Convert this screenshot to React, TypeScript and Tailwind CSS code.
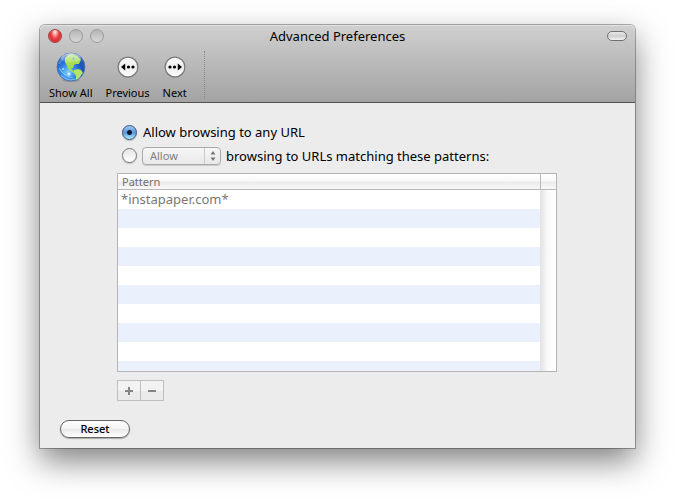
import { useState } from "react";

const PATTERNS = ["*instapaper.com*", "", "", "", "", "", "", "", "", ""];

function GlobeIcon() {
  return (
    <svg width="30" height="30" viewBox="0 0 30 30" aria-hidden="true">
      <defs>
        <radialGradient id="ocean" cx="0.4" cy="0.68" r="0.65">
          <stop offset="0" stopColor="#7fd3ff" />
          <stop offset="0.4" stopColor="#358ae8" />
          <stop offset="0.8" stopColor="#1d50bd" />
          <stop offset="1" stopColor="#2a5fb4" />
        </radialGradient>
        <linearGradient id="gloss" x1="0" y1="0" x2="0" y2="1">
          <stop offset="0" stopColor="#fff" stopOpacity="0.7" />
          <stop offset="1" stopColor="#fff" stopOpacity="0.1" />
        </linearGradient>
        <clipPath id="disc">
          <circle cx="15" cy="15" r="14" />
        </clipPath>
      </defs>
      <ellipse cx="15" cy="28" rx="9" ry="2" fill="#555" opacity="0.3" />
      <circle cx="15" cy="15" r="14" fill="url(#ocean)" stroke="#4a74ad" strokeWidth="0.8" />
      <g clipPath="url(#disc)">
        <path
          d="M9 6l3-3 4-1 5 2 4 4-2 4-3 0-2 1-1 3-2 0 1 2 3 2-1 1-5-3-2-4-2-4z"
          fill="#a5dc52"
        />
        <path d="M18 18l4-1 3 1 2 3-2 2-2 3-3 2 0-4-2-3z" fill="#b5e35f" />
        <path d="M2 12l3-6 3-2-1 4-3 4z" fill="#5c9fd8" opacity="0.7" />
        <path d="M17 5l2 1-1 2-2-1z" fill="#5f9fd4" />
        <path d="M3 16q6 9 14 10" stroke="#c4ecff" strokeWidth="1.2" fill="none" opacity="0.5" />
        <circle cx="13" cy="22" r="1.6" fill="#e8f9ff" opacity="0.9" />
        <circle cx="7" cy="17" r="1" fill="#d9f3ff" opacity="0.8" />
        <ellipse cx="15" cy="6" rx="10" ry="5" fill="url(#gloss)" />
      </g>
      <path d="M5 23.5q10 9 20 0" stroke="#b5eeff" strokeWidth="1" fill="none" opacity="0.6" />
    </svg>
  );
}

function StepIcon({ id, forward = false }: { id: string; forward?: boolean }) {
  return (
    <svg width="22" height="22" viewBox="0 0 22 22" aria-hidden="true">
      <defs>
        <linearGradient id={id} x1="0" y1="0" x2="0" y2="1">
          <stop offset="0" stopColor="#fff" />
          <stop offset="0.5" stopColor="#ececec" />
          <stop offset="1" stopColor="#fff" />
        </linearGradient>
      </defs>
      <circle cx="11" cy="12" r="10" fill="#666" opacity="0.35" />
      <circle cx="11" cy="11" r="9.9" fill={`url(#${id})`} stroke="#7a7a7a" strokeWidth="1.3" />
      <g transform={forward ? "matrix(-1 0 0 1 22 0)" : undefined} fill="#000">
        <path d="M4 11L8.2 7.6V14.4z" />
        <circle cx="11.5" cy="11" r="1.6" />
        <circle cx="16" cy="11" r="1.6" />
      </g>
    </svg>
  );
}

interface ToolbarButtonProps {
  icon: React.ReactNode;
  label: string;
}

function ToolbarButton({ icon, label }: ToolbarButtonProps) {
  return (
    <button type="button" className="flex flex-col items-center gap-0.5 text-[11px] leading-4">
      <span className="flex h-8 items-center">{icon}</span>
      <span>{label}</span>
    </button>
  );
}

const radioClass =
  "size-[15px] shrink-0 appearance-none rounded-full border border-[#777] bg-linear-to-b from-[#e6e6e6] to-white shadow-[0_1px_1px_#bbb] checked:border-[#31527f] checked:bg-[radial-gradient(circle_at_50%_50%,#0c1a30_0_2px,transparent_3px),linear-gradient(#a9c8ee,#5795dc_50%,#b2ecff)]";

export default function App() {
  const [mode, setMode] = useState("any");

  return (
    <div className="bg-white px-10 pt-[25px] pb-[54px] font-['Noto_Sans','Open_Sans',sans-serif] text-black">
      <main className="rounded-t-[5px] bg-[#ececec] shadow-[0_0_0_1px_#0000004d,0_13px_32px_#00000080]">
        <header className="rounded-t-[5px] border-b border-[#515151] bg-linear-to-b from-[#d0d0d0] to-[#a3a3a3] shadow-[inset_0_1px_0_#e2e2e2]">
          <div className="grid h-[22px] grid-cols-[1fr_auto_1fr] items-center px-2">
            <div className="flex gap-[7px]">
              <button
                type="button"
                aria-label="Close"
                className="size-[14px] rounded-full border border-[#a43b3b] bg-[radial-gradient(ellipse_at_50%_15%,#ffd5d3_0_10%,#e9484b_45%,#d92f35_65%,#ff9c94)]"
              />
              <button
                type="button"
                aria-label="Minimize"
                className="size-[14px] rounded-full border border-[#9b9b9b] bg-linear-to-b from-[#b5b5b5] to-[#d8d8d8]"
              />
              <button
                type="button"
                aria-label="Zoom"
                className="size-[14px] rounded-full border border-[#9b9b9b] bg-linear-to-b from-[#b5b5b5] to-[#d8d8d8]"
              />
            </div>
            <h1 className="text-[13px] leading-5">Advanced Preferences</h1>
            <button
              type="button"
              aria-label="Toggle toolbar"
              className="h-[10px] w-5 justify-self-end rounded-full border border-[#707070] bg-linear-to-b from-[#e8e8e8] via-[#cfcfcf] to-[#f4f4f4]"
            />
          </div>
          <nav className="flex h-[55px] items-start gap-[13px] px-[9px] pt-1">
            <ToolbarButton icon={<GlobeIcon />} label="Show All" />
            <ToolbarButton icon={<StepIcon id="prev-face" />} label="Previous" />
            <ToolbarButton icon={<StepIcon id="next-face" forward />} label="Next" />
            <div className="ml-1 h-12 border-l border-dotted border-[#888]" />
          </nav>
        </header>

        <div className="pt-[17px] pr-[78px] pl-[77px]">
          <div className="flex h-6 items-center gap-[6px] pl-[5px]">
            <input
              id="any-url"
              type="radio"
              name="mode"
              checked={mode === "any"}
              onChange={() => setMode("any")}
              className={radioClass}
            />
            <label htmlFor="any-url" className="text-[13px] leading-5">
              Allow browsing to any URL
            </label>
          </div>
          <div className="flex h-[23px] items-center gap-[5px] pl-[5px]">
            <input
              id="matching"
              type="radio"
              name="mode"
              checked={mode === "matching"}
              onChange={() => setMode("matching")}
              className={radioClass}
            />
            <div className="relative h-[18px] w-[79px]">
              <select
                aria-label="Action"
                disabled={mode === "any"}
                className="block h-full w-full appearance-none rounded-[4px] border border-[#aaa] bg-linear-to-b from-[#f6f6f6] to-[#e9e9e9] pl-[7px] text-[11px] leading-4 text-[#808080] opacity-100 shadow-[0_1px_0_#ccc]"
              >
                <option>Allow</option>
                <option>Deny</option>
              </select>
              <span className="pointer-events-none absolute inset-y-px right-px flex w-4 items-center justify-center border-l border-[#ccc]">
                <svg width="6" height="10" viewBox="0 0 6 10" fill="#777" aria-hidden="true">
                  <path d="M3 0l2.5 3.5h-5zM3 10l2.5-3.5h-5z" />
                </svg>
              </span>
            </div>
            <label htmlFor="matching" className="text-[13px] leading-5">
              browsing to URLs matching these patterns:
            </label>
          </div>

          <div className="mt-[6px] border border-[#b4b4b4] bg-white">
            <table className="w-full table-fixed border-separate border-spacing-0">
              <thead>
                <tr className="h-4 bg-[linear-gradient(#fff,#f8f8f8_45%,#eaeaea_50%,#fbfbfb)]">
                  <th
                    scope="col"
                    className="border-b border-[#b9b9b9] p-0 pl-1 text-left text-[11px] leading-[15px] font-normal text-[#6f6f6f]"
                  >
                    Pattern
                  </th>
                  <td className="w-4 border-b border-l border-[#b9b9b9] p-0" />
                </tr>
              </thead>
              <tbody>
                {PATTERNS.map((pattern, i) => (
                  <tr key={i} className="h-[19px] last:h-[10px] even:bg-[#eaf1fd]">
                    <td className="p-0 pl-[3px] text-[13px] leading-[19px] text-[#777]">{pattern}</td>
                    {i === 0 && (
                      <td
                        rowSpan={PATTERNS.length}
                        className="bg-linear-to-r from-[#e2e2e2] via-[#fafafa] to-white p-0"
                      />
                    )}
                  </tr>
                ))}
              </tbody>
            </table>
          </div>

          <div className="mt-2 flex">
            <button
              type="button"
              aria-label="Add pattern"
              className="flex h-[21px] w-6 items-center justify-center border border-[#bfbfbf] bg-[linear-gradient(#f3f3f3_50%,#ebebeb_50%)]"
            >
              <svg width="8" height="8" viewBox="0 0 8 8" fill="#858585" aria-hidden="true">
                <path d="M3 0h2v3h3v2H5v3H3V5H0V3h3z" />
              </svg>
            </button>
            <button
              type="button"
              aria-label="Remove pattern"
              className="flex h-[21px] w-[23px] items-center justify-center border border-l-0 border-[#bfbfbf] bg-[linear-gradient(#f3f3f3_50%,#ebebeb_50%)]"
            >
              <svg width="8" height="8" viewBox="0 0 8 8" fill="#858585" aria-hidden="true">
                <path d="M0 3h8v2H0z" />
              </svg>
            </button>
          </div>
        </div>

        <footer className="px-5 pt-[19px] pb-[10px]">
          <button
            type="button"
            className="block h-[18px] w-[70px] rounded-full border border-[#666] bg-[linear-gradient(#fff,#f3f3f3_50%,#e8e8e8_50%,#fff)] text-[11px] leading-4 font-medium shadow-[0_1px_1px_#aaa]"
          >
            Reset
          </button>
        </footer>
      </main>
    </div>
  );
}
